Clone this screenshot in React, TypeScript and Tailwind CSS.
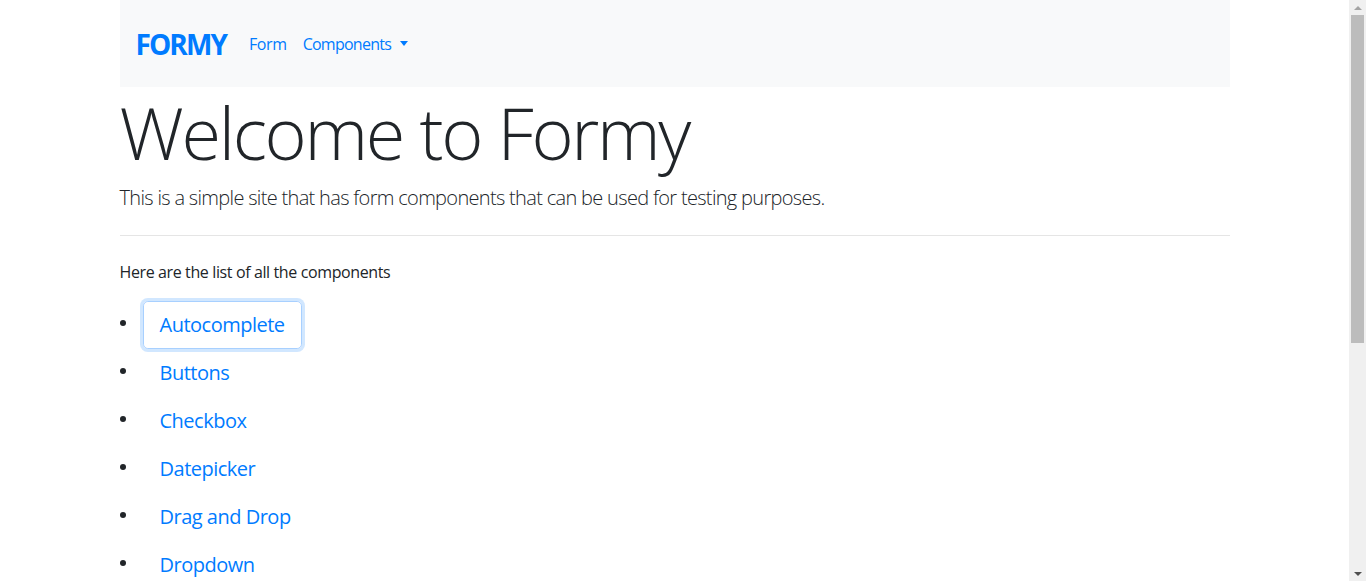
import React from "react";

const items = ["Autocomplete", "Buttons", "Checkbox", "Datepicker", "Drag and Drop", "Dropdown"];

export default function App() {
  return (
    <div className="flex h-[581px] w-[1366px] overflow-hidden bg-white text-[#212529]" style={{ fontFamily: '"Open Sans", "Noto Sans", sans-serif' }}>
      <div className="w-[1349px] h-full overflow-hidden">
        <div className="w-[1110px] mx-auto">
          <nav className="h-[87px] bg-[#f8f9fa] flex items-center px-4">
            <span className="text-[28px] font-bold text-[#007bff] tracking-[-1.9px] mr-[15px]">FORMY</span>
            <a className="text-[16px] text-[#007bff] px-2 tracking-[-0.4px]">Form</a>
            <a className="text-[16px] text-[#007bff] px-2 flex items-center tracking-[-0.75px]">
              Components
              <span className="ml-[9px] inline-block w-0 h-0 border-l-[4px] border-r-[4px] border-t-[5px] border-l-transparent border-r-transparent border-t-[#007bff]"></span>
            </a>
          </nav>
          <h1 className="text-[72px] font-light leading-[1.2] mt-[2px] mb-2 tracking-[-2.3px]">Welcome to Formy</h1>
          <p className="text-[20px] font-light leading-[1.5] mt-[2px] tracking-[-0.68px]">This is a simple site that has form components that can be used for testing purposes.</p>
          <hr className="mt-[22px] mb-[24px] border-t border-[rgba(0,0,0,0.1)]" />
          <p className="text-[16px] leading-[1.5] mb-4 tracking-[-0.38px]">Here are the list of all the components</p>
          <div className="flex flex-col pt-[1px]">
            {items.map((t, i) => (
              <div key={t} className="flex items-center">
                <span className="w-[6px] h-[6px] rounded-full bg-[#212529] mr-[17px] -mt-[4px] shrink-0"></span>
                <a
                  className={
                    "inline-block text-[20px] leading-[1.5] text-[#007bff] px-4 py-2 rounded-[4.8px] border tracking-[-0.5px] " +
                    (i === 0 ? "border-[#a8d0ff] shadow-[0_0_0_3px_rgba(0,123,255,0.18)]" : "border-transparent")
                  }
                >
                  {t}
                </a>
              </div>
            ))}
          </div>
        </div>
      </div>
      <div className="w-[17px] h-full bg-[#f0f0f0] flex flex-col items-center">
        <div className="h-[15px] flex items-center justify-center">
          <span className="inline-block w-0 h-0 border-l-[4px] border-r-[4px] border-b-[4px] border-l-transparent border-r-transparent border-b-[#a3a3a3]"></span>
        </div>
        <div className="w-[13px] h-[328px] bg-[#bcbcbc]"></div>
        <div className="flex-1"></div>
        <div className="h-[15px] flex items-center justify-center">
          <span className="inline-block w-0 h-0 border-l-[4px] border-r-[4px] border-t-[4px] border-l-transparent border-r-transparent border-t-[#505050]"></span>
        </div>
      </div>
    </div>
  );
}
